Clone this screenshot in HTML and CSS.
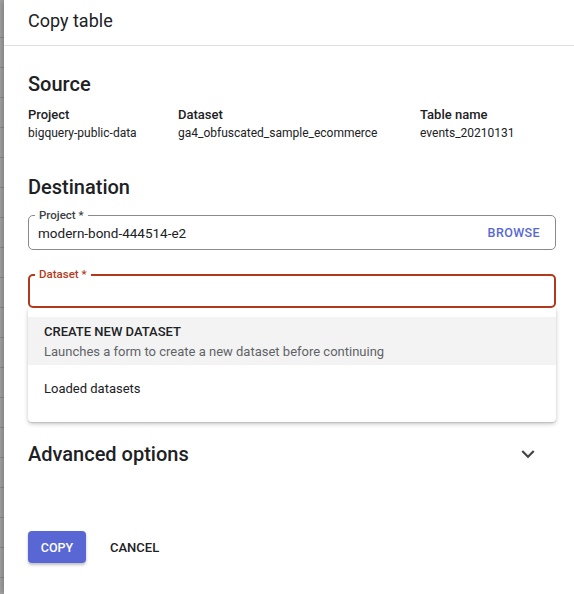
FILE: index.html
```html
<!DOCTYPE html>
<html>
<head>
<meta charset="utf-8">
<link rel="stylesheet" href="styles.css">
</head>
<body>
<div class="page">
  <div class="backdrop"></div>
  <div class="dialog">
    <div class="header">Copy table</div>
    <div class="content">
      <h2 class="section-title">Source</h2>
      <div class="source-grid">
        <div class="col col-1">
          <div class="label">Project</div>
          <div class="value">bigquery-public-data</div>
        </div>
        <div class="col col-2">
          <div class="label">Dataset</div>
          <div class="value">ga4_obfuscated_sample_ecommerce</div>
        </div>
        <div class="col col-3">
          <div class="label">Table name</div>
          <div class="value">events_20210131</div>
        </div>
      </div>

      <h2 class="section-title dest-title">Destination</h2>
      <div class="field">
        <span class="field-label">Project *</span>
        <span class="field-value">modern-bond-444514-e2</span>
        <span class="browse">BROWSE</span>
      </div>
      <div class="field field-focus">
        <span class="field-label">Dataset *</span>
      </div>
      <div class="menu">
        <div class="menu-item active">
          <div class="menu-title">CREATE NEW DATASET</div>
          <div class="menu-sub">Launches a form to create a new dataset before continuing</div>
        </div>
        <div class="menu-item plain">Loaded datasets</div>
      </div>

      <div class="advanced">
        <span class="adv-title">Advanced options</span>
        <svg class="chevron" viewBox="0 0 24 24" width="26" height="26"><path d="M16.59 8.59L12 13.17 7.41 8.59 6 10l6 6 6-6z" fill="#444"/></svg>
      </div>

      <div class="actions">
        <button class="btn-primary">COPY</button>
        <button class="btn-text">CANCEL</button>
      </div>
    </div>
  </div>
</div>
</body>
</html>
```

FILE: styles.css
```css
html, body {
  margin: 0;
  padding: 0;
  height: 100%;
}
body {
  font-family: Roboto, "Liberation Sans", Arial, sans-serif;
  color: #202124;
  background: #9a9a9a;
}
.page {
  display: flex;
  height: 594px;
  overflow: hidden;
}
.backdrop {
  width: 4px;
  flex: 0 0 4px;
  background: repeating-linear-gradient(to bottom, #a6a6a6 0, #a6a6a6 29px, #8e8e8e 29px, #8e8e8e 30px);
  background-position: 0 8px;
}
.dialog {
  flex: 1;
  background: #fff;
  box-shadow: -2px 0 6px rgba(0,0,0,0.25);
  position: relative;
}
.header {
  height: 45px;
  line-height: 42px;
  padding-left: 24px;
  font-size: 18px;
  color: #202124;
  border-bottom: 1px solid #e0e0e0;
}
.content {
  padding: 26px 18px 0 24px;
}
.section-title {
  margin: 0;
  font-size: 20px;
  font-weight: 500;
  line-height: 24px;
  color: #202124;
}
.source-grid {
  display: flex;
  margin-top: 11px;
}
.col-1 { width: 150px; }
.col-2 { width: 242px; }
.label {
  font-size: 13px;
  font-weight: 500;
  line-height: 16px;
  margin-bottom: 2px;
}
.value {
  font-size: 12px;
  line-height: 16px;
  color: #202124;
}
.dest-title {
  margin-top: 34px;
}
.field {
  position: relative;
  margin-top: 16px;
  height: 35px;
  box-sizing: border-box;
  border: 1px solid #8a8a8a;
  border-radius: 5px;
  display: flex;
  align-items: center;
  padding: 0 15px 0 9px;
}
.field-label {
  position: absolute;
  top: -9px;
  left: 6px;
  padding: 0 4px;
  background: #fff;
  font-size: 11.5px;
  font-weight: 500;
  line-height: 16px;
  color: #3c4043;
}
.field-value {
  font-size: 13.5px;
  color: #202124;
  flex: 1;
}
.browse {
  font-size: 12.5px;
  font-weight: 500;
  letter-spacing: 0.4px;
  color: #5868d2;
}
.field-focus {
  margin-top: 24px;
  height: 34px;
  border: 2px solid #b23a1c;
}
.field-focus .field-label {
  color: #b23a1c;
  top: -10px;
  left: 5px;
}
.menu {
  margin-top: 0;
  background: #fff;
  border-radius: 0 0 4px 4px;
  box-shadow: 0 2px 4px rgba(0,0,0,0.22), 0 1px 1px rgba(0,0,0,0.1);
  padding: 9px 0 10px;
}
.menu-item {
  padding: 0 16px;
}
.menu-item.active {
  background: #f3f3f3;
  height: 48px;
  box-sizing: border-box;
  padding-top: 7px;
}
.menu-title {
  font-size: 13px;
  font-weight: 500;
  line-height: 16px;
  color: #202124;
}
.menu-sub {
  font-size: 13px;
  line-height: 16px;
  margin-top: 4px;
  color: #5f6368;
}
.menu-item.plain {
  height: 47px;
  line-height: 48px;
  font-size: 13px;
  color: #202124;
}
.advanced {
  display: flex;
  align-items: center;
  justify-content: space-between;
  margin-top: 20px;
  height: 24px;
}
.adv-title {
  font-size: 20px;
  font-weight: 500;
  color: #202124;
}
.chevron {
  margin-right: 15px;
}
.actions {
  display: flex;
  align-items: center;
  margin-top: 65px;
}
.btn-primary {
  height: 32px;
  width: 58px;
  border: none;
  border-radius: 4px;
  background: #5867d3;
  color: #fff;
  font-family: inherit;
  font-size: 12.5px;
  font-weight: 500;
  box-shadow: 0 2px 3px rgba(0,0,0,0.25);
  padding: 0;
}
.btn-text {
  margin-left: 24px;
  border: none;
  background: none;
  font-family: inherit;
  font-size: 13px;
  font-weight: 500;
  color: #202124;
  padding: 0;
}
```
